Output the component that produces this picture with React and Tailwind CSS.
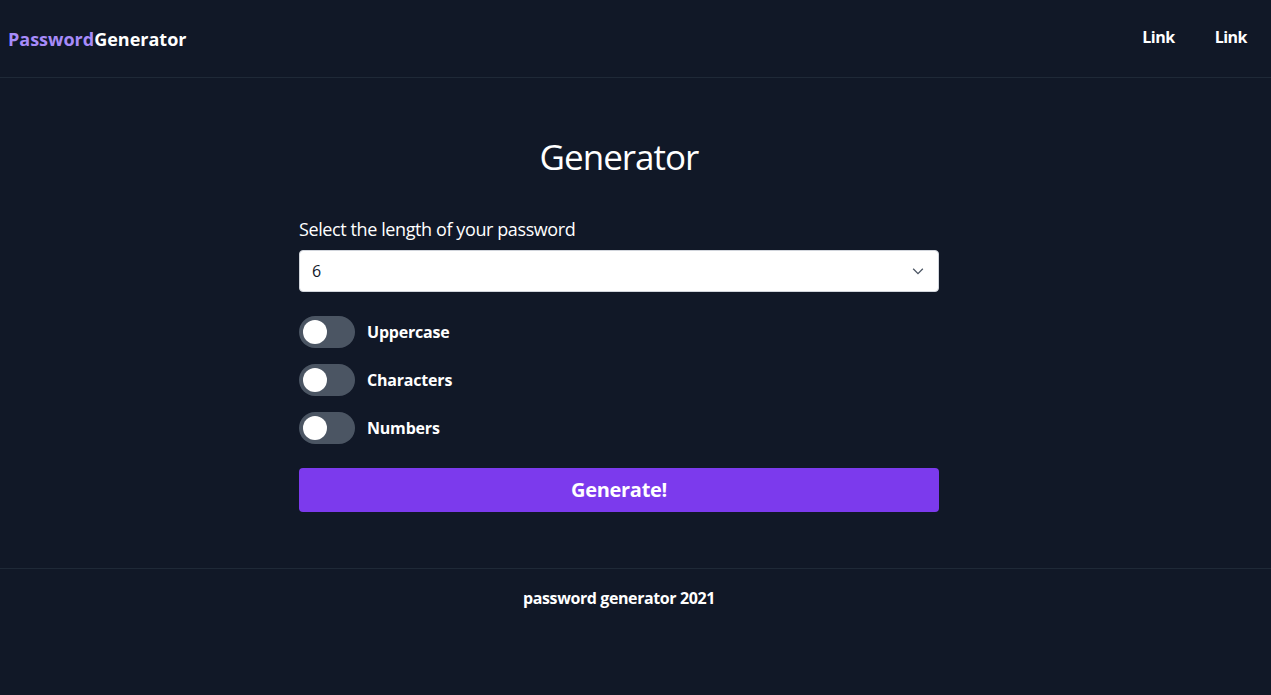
import { useState } from "react";

const font = { fontFamily: '"Segoe UI", "Open Sans", "Noto Sans", sans-serif' };

function Toggle({ label, checked, onChange }) {
  return (
    <label className="flex items-center gap-3 cursor-pointer">
      <button
        type="button"
        onClick={() => onChange(!checked)}
        className={
          "relative h-8 w-14 rounded-full flex items-center px-1 " +
          (checked ? "bg-[#7c3aed] justify-end" : "bg-[#4b5563] justify-start")
        }
      >
        <span className="h-6 w-6 rounded-full bg-white" />
      </button>
      <span className="text-white font-bold text-base tracking-[-0.2px]">{label}</span>
    </label>
  );
}

const App = () => {
  const [length, setLength] = useState("6");
  const [opts, setOpts] = useState({ upper: false, chars: false, nums: false });

  return (
    <div className="min-h-[695px] bg-[#111827] text-white" style={font}>
      {/* BEGIN: Navbar */}
      <nav className="h-[78px] flex items-center justify-between border-b border-[#1f2937] pl-2 pr-6">
        <a className="text-lg font-bold">
          <span className="text-[#a78bfa]">Password</span>
          <span className="text-white">Generator</span>
        </a>
        <div className="flex gap-10 font-bold text-base tracking-[-0.5px] -mt-[3px]">
          <a>Link</a>
          <a>Link</a>
        </div>
      </nav>
      {/* END: Navbar */}

      <div className="flex justify-center pr-[33px] pt-[59px] pb-[56px] border-b border-[#1f2937]">
        <div className="w-[640px] flex flex-col">
          <h1 className="text-[35px] leading-10 tracking-[-1px] text-center mb-[38px]">Generator</h1>
          <label className="text-lg leading-7 tracking-[-0.4px] mb-[7px]">Select the length of your password</label>
          <div className="relative">
            <select
              value={length}
              onChange={(e) => setLength(e.target.value)}
              className="appearance-none w-full h-[42px] bg-white text-gray-900 rounded border border-gray-300 pl-3 text-base"
            >
              {[6, 8, 10, 12, 14, 16, 18, 20].map((n) => (
                <option key={n} value={n}>
                  {n}
                </option>
              ))}
            </select>
            <svg
              className="absolute right-[14px] top-[14px] pointer-events-none"
              width="14"
              height="14"
              viewBox="0 0 16 16"
              fill="none"
              stroke="#4b5563"
              strokeWidth="1.5"
            >
              <path d="M2.5 5.5l5.5 5.5 5.5-5.5" />
            </svg>
          </div>

          <div className="flex flex-col gap-4 mt-6">
            <Toggle label="Uppercase" checked={opts.upper} onChange={(v) => setOpts({ ...opts, upper: v })} />
            <Toggle label="Characters" checked={opts.chars} onChange={(v) => setOpts({ ...opts, chars: v })} />
            <Toggle label="Numbers" checked={opts.nums} onChange={(v) => setOpts({ ...opts, nums: v })} />
          </div>

          <button className="mt-6 h-11 w-full rounded bg-[#7c3aed] text-white text-xl font-bold tracking-[-0.3px]">
            Generate!
          </button>
        </div>
      </div>

      {/* BEGIN: Footer */}
      <footer className="flex justify-center pr-[33px] pt-[17px] font-bold text-base tracking-[-0.4px]">
        password generator 2021
      </footer>
    </div>
  );
};

export default App;
